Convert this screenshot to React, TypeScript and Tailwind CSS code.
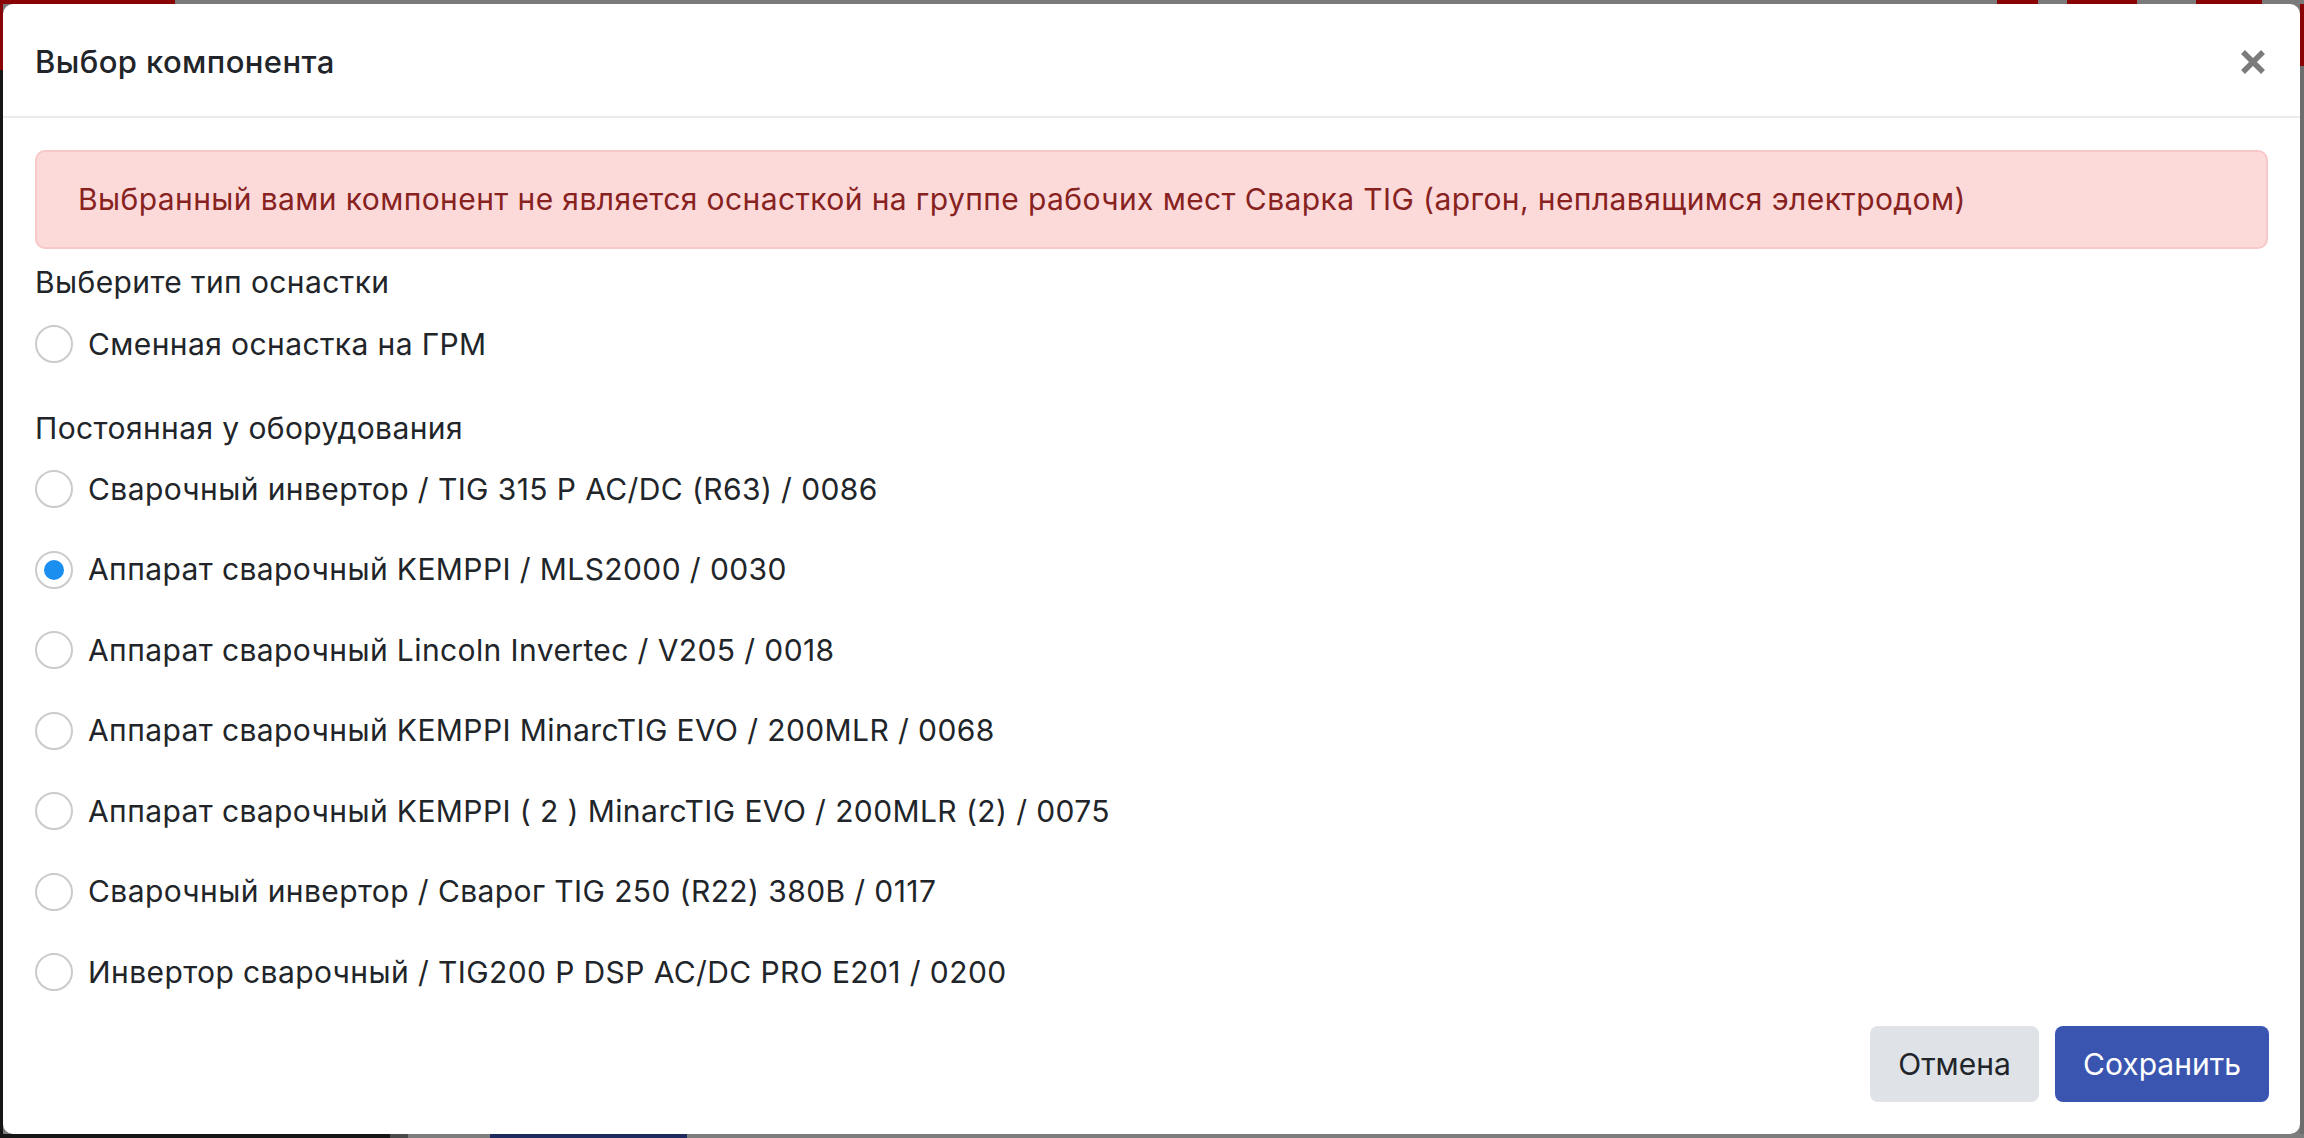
import { useState } from 'react';

const options = [
  'Сварочный инвертор / TIG 315 P AC/DC (R63) / 0086',
  'Аппарат сварочный KEMPPI / MLS2000 / 0030',
  'Аппарат сварочный Lincoln Invertec / V205 / 0018',
  'Аппарат сварочный KEMPPI MinarcTIG EVO / 200MLR / 0068',
  'Аппарат сварочный KEMPPI ( 2 ) MinarcTIG EVO / 200MLR (2) / 0075',
  'Сварочный инвертор / Сварог TIG 250 (R22) 380В / 0117',
  'Инвертор сварочный / TIG200 P DSP AC/DC PRO E201 / 0200',
];

function Radio({ label, checked, onClick }: { label: string; checked: boolean; onClick: () => void }) {
  return (
    <label className="flex items-center h-[42px] cursor-pointer" onClick={onClick}>
      <span className="w-[38px] h-[38px] rounded-full border-2 border-[#cbcbcb] bg-white flex items-center justify-center shrink-0">
        {checked && <span className="w-[20px] h-[20px] rounded-full bg-[#1a8ff0]" />}
      </span>
      <span className="ml-[15px]">{label}</span>
    </label>
  );
}

export default function App() {
  const [selected, setSelected] = useState<string>(options[1]);

  return (
    <div className="w-full h-[1138px] flex flex-col bg-[#7b7b7b] overflow-hidden font-['Inter',sans-serif]">
      {/* backdrop strip above the modal */}
      <div className="h-[4px] flex shrink-0">
        <div className="w-[175px] bg-[#8a0406]" />
        <div className="w-[1822px] bg-[#7a7a7a]" />
        <div className="w-[41px] bg-[#8a0406]" />
        <div className="w-[29px] bg-[#7a7a7a]" />
        <div className="w-[70px] bg-[#8a0406]" />
        <div className="w-[59px] bg-[#7a7a7a]" />
        <div className="w-[66px] bg-[#8a0406]" />
        <div className="flex-1 bg-[#7a7a7a]" />
      </div>

      <div className="flex h-[1130px] shrink-0">
        <div className="w-[3px] flex flex-col">
          <div className="h-[66px] bg-[#8a0406]" />
          <div className="flex-1 bg-[#161616]" />
        </div>

        {/* modal */}
        <div className="w-[2297px] h-full bg-white rounded-[10px] flex flex-col text-[#212529] tracking-[0.4px]">
          <div className="h-[114px] border-b-2 border-[#e9ecef] flex items-center justify-between pl-[32px] pr-[34px] pt-[4px] shrink-0">
            <h5 className="text-[31px] font-medium">Выбор компонента</h5>
            <button className="w-[26px] h-[26px]">
              <svg viewBox="0 0 26 26" className="w-[26px] h-[26px]">
                <path d="M3 3 L23 23 M23 3 L3 23" stroke="#7b7b7b" strokeWidth="5.5" />
              </svg>
            </button>
          </div>

          <div className="flex flex-col px-[32px] pt-[32px] text-[30px]">
            <div className="h-[99px] border-2 border-[#f8c8c8] bg-[#fddada] rounded-[10px] flex items-center pl-[41px] text-[#87221f]">
              Выбранный вами компонент не является оснасткой на группе рабочих мест Сварка TIG (аргон, неплавящимся электродом)
            </div>

            <div className="h-[42px] mt-[12px] flex items-center">Выберите тип оснастки</div>
            <div className="mt-[20px]">
              <Radio label="Сменная оснастка на ГРМ" checked={selected === 'grm'} onClick={() => setSelected('grm')} />
            </div>

            <div className="h-[42px] mt-[42px] flex items-center">Постоянная у оборудования</div>
            <div className="flex flex-col gap-[38.5px] mt-[19px]">
              {options.map((o) => (
                <Radio key={o} label={o} checked={selected === o} onClick={() => setSelected(o)} />
              ))}
            </div>
          </div>

          <div className="mt-auto flex justify-end gap-[16px] pr-[31px] pb-[32px] tracking-normal">
            <button className="w-[169px] h-[76px] rounded-[8px] bg-[#dfe2e6] text-[#212529] text-[30px]">Отмена</button>
            <button className="w-[214px] h-[76px] rounded-[8px] bg-[#3a55b0] text-white text-[30px]">Сохранить</button>
          </div>
        </div>

        <div className="flex-1 flex flex-col">
          <div className="h-[62px] bg-[#8a0406]" />
          <div className="flex-1 bg-[#6d6d6d]" />
        </div>
      </div>

      <div className="h-[4px] flex shrink-0">
        <div className="w-[390px] bg-[#161616]" />
        <div className="w-[18px] bg-[#4a4a4a]" />
        <div className="w-[82px] bg-[#7d7d7d]" />
        <div className="w-[197px] bg-[#1f2b5e]" />
        <div className="flex-1 bg-[#7d7d7d]" />
      </div>
    </div>
  );
}
